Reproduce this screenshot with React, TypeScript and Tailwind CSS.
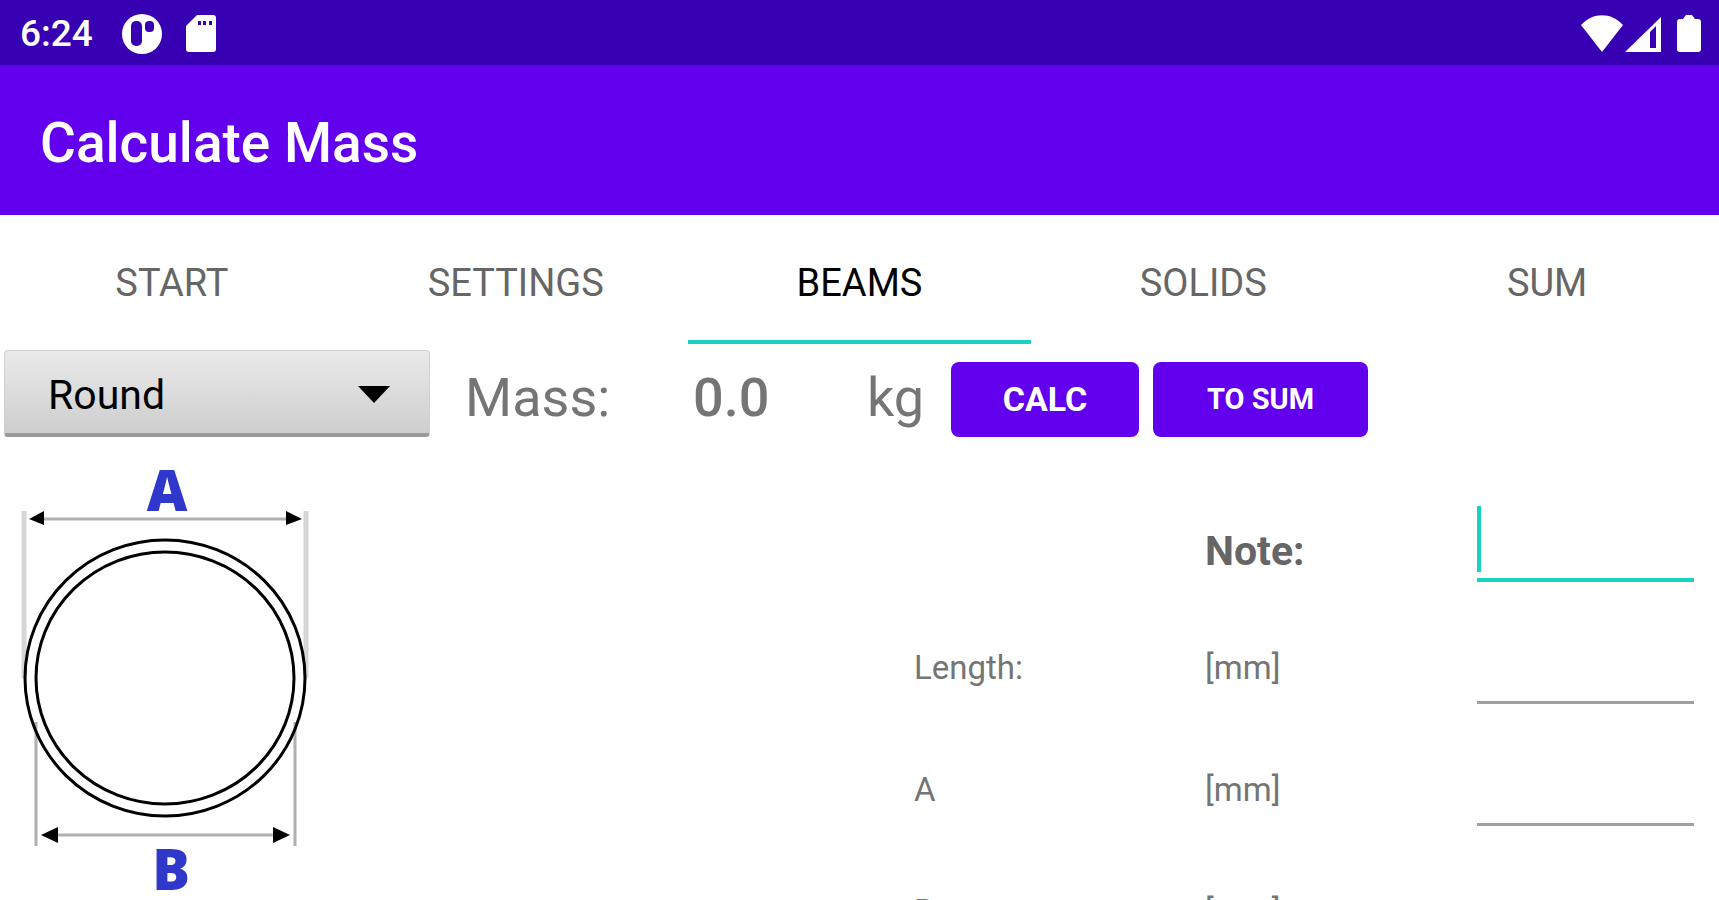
import React, { useState } from 'react';

const TABS = ['START', 'SETTINGS', 'BEAMS', 'SOLIDS', 'SUM'];

const FIELDS = [
  { id: 'length', label: 'Length:', unit: '[mm]' },
  { id: 'a', label: 'A', unit: '[mm]' },
  { id: 'b', label: 'B', unit: '[mm]' },
];

function StatusBar() {
  return (
    <div className="flex h-[65px] shrink-0 items-center justify-between bg-[#3700b3] pt-0.5 pr-[18px] pl-5 text-white">
      <div className="flex items-center">
        <span className="text-[37px] leading-[44px] font-medium">6:24</span>
        <svg className="ml-[29px] h-10 w-10" viewBox="0 0 40 40">
          <circle cx="20" cy="20" r="20" fill="white" />
          <rect x="9" y="7" width="11" height="25" rx="5" fill="#3700b3" />
          <rect x="23" y="7" width="9" height="11" rx="4" fill="#3700b3" />
        </svg>
        <svg className="ml-6 h-[37px] w-[30px]" viewBox="0 0 30 37">
          <path d="M11 0h16a3 3 0 0 1 3 3v31a3 3 0 0 1-3 3H3a3 3 0 0 1-3-3V11z" fill="white" />
          <path d="M12 6h3v4h-3zM17 6h3v4h-3zM23 6h3v4h-3z" fill="#3700b3" />
        </svg>
      </div>
      <div className="flex items-center">
        <svg className="h-[37px] w-[42px]" viewBox="0 0 42 37">
          <path d="M0 10C12-3 30-3 42 10L21 37z" fill="white" />
        </svg>
        <svg className="ml-0.5 h-[37px] w-9" viewBox="0 0 36 37">
          <path fillRule="evenodd" d="M0 37L36 2v35zM25 17v16h6V11z" fill="white" />
        </svg>
        <svg className="ml-4 h-[37px] w-6" viewBox="0 0 24 37">
          <path d="M9 0h6l3 4h3a3 3 0 0 1 3 3v27a3 3 0 0 1-3 3H3a3 3 0 0 1-3-3V7a3 3 0 0 1 3-3h3z" fill="white" />
        </svg>
      </div>
    </div>
  );
}

function RoundDrawing() {
  return (
    <svg className="mt-[13px] h-[470px] w-[330px]" viewBox="0 0 330 470" role="img" aria-label="Round">
      <g stroke="#d6d6d6" strokeWidth="5">
        <path d="M24 61V228M306 61V228" />
      </g>
      <g stroke="#b0b0b0" strokeWidth="3">
        <path d="M36 272V396M295 272V396M40 69H290M54 385H278" />
      </g>
      <path d="M29 69L44 61V75zM302 69L286 61V75zM41 385L58 377V393zM290 385L273 377V393z" fill="black" />
      <g fill="none" stroke="black" strokeWidth="3">
        <ellipse cx="165" cy="228" rx="140" ry="138" />
        <ellipse cx="165" cy="228" rx="129" ry="126" />
      </g>
      <g fill="#3038cc" fontFamily="'Open Sans', sans-serif" fontWeight="800" fontSize="56" textAnchor="middle">
        <text x="167" y="61">A</text>
        <text x="171" y="440">B</text>
      </g>
    </svg>
  );
}

export default function App() {
  const [activeTab, setActiveTab] = useState('BEAMS');
  const [shape, setShape] = useState('Round');
  const [note, setNote] = useState('');
  const [values, setValues] = useState<Record<string, string>>({});

  return (
    <div className="flex h-screen flex-col overflow-hidden bg-white font-['Roboto',sans-serif] text-[#757575]">
      <StatusBar />

      <header className="flex h-[150px] shrink-0 items-center bg-[#6200ee] px-10 pt-1.5">
        <h1 className="text-[55px] leading-[64px] font-medium text-white">Calculate Mass</h1>
      </header>

      {/* Tabs */}
      <nav className="flex h-[129px] shrink-0">
        {TABS.map(tab => (
          <button
            key={tab}
            onClick={() => setActiveTab(tab)}
            className={`flex-1 border-y-4 border-t-transparent pt-1.5 text-[38px] leading-[44px] ${
              activeTab === tab ? 'border-b-[#18d3c0] text-black' : 'border-b-transparent text-[#666666]'
            }`}
          >
            {tab}
          </button>
        ))}
      </nav>

      {/* Shape and result */}
      <div className="flex h-[93px] shrink-0 items-end pl-1">
        <div className="relative">
          <select
            aria-label="Shape"
            value={shape}
            onChange={e => setShape(e.target.value)}
            className="h-[87px] w-[426px] appearance-none rounded-sm border border-b-4 border-[#d0d0d0] border-b-[#9a9a9a] bg-linear-to-b from-[#eaeaea] to-[#cecece] pt-2 pl-[43px] text-[41px] text-black"
          >
            <option>Round</option>
            <option>Square</option>
          </select>
          <svg className="pointer-events-none absolute top-9 right-10 h-[17px] w-8" viewBox="0 0 32 17">
            <path d="M0 0H32L16 17z" fill="black" />
          </svg>
        </div>
        <div className="flex h-[78px] items-center pl-[35px] text-[54px] leading-[60px]">
          <span className="w-[228px]">Mass:</span>
          <output className="w-[174px] font-medium">0.0</output>
          <span className="w-[84px]">kg</span>
        </div>
        <button className="h-[75px] w-[188px] rounded-lg bg-[#6200ee] text-[34px] font-bold text-white">CALC</button>
        <button className="ml-[14px] h-[75px] w-[215px] rounded-lg bg-[#6200ee] text-[29px] font-bold text-white">TO SUM</button>
      </div>

      <main className="grid grid-cols-[914fr_805fr] items-start">
        <RoundDrawing />
        <form className="pt-6 pr-[25px]">
          <div className="grid h-[121px] grid-cols-[291fr_272fr_217fr] items-end">
            <label htmlFor="note" className="col-start-2 pb-[7px] text-[41px] leading-[48px] font-bold text-[#666666]">
              Note:
            </label>
            <div className="relative">
              <input
                id="note"
                value={note}
                onChange={e => setNote(e.target.value)}
                className="block h-20 w-full border-b-4 border-[#18d3c0] text-[40px] caret-transparent outline-none"
              />
              {note === '' && <span className="absolute top-1 left-0 h-[66px] w-1 bg-[#18d3c0]" />}
            </div>
          </div>
          {FIELDS.map(field => (
            <div key={field.id} className="grid h-[122px] grid-cols-[291fr_272fr_217fr] items-end text-[33px] leading-[40px]">
              <label htmlFor={field.id} className="pb-4">{field.label}</label>
              <span className="pb-4">{field.unit}</span>
              <input
                id={field.id}
                inputMode="decimal"
                value={values[field.id] || ''}
                onChange={e => setValues({ ...values, [field.id]: e.target.value })}
                className="block h-20 w-full border-b-3 border-[#a0a0a0] outline-none"
              />
            </div>
          ))}
        </form>
      </main>
    </div>
  );
}
